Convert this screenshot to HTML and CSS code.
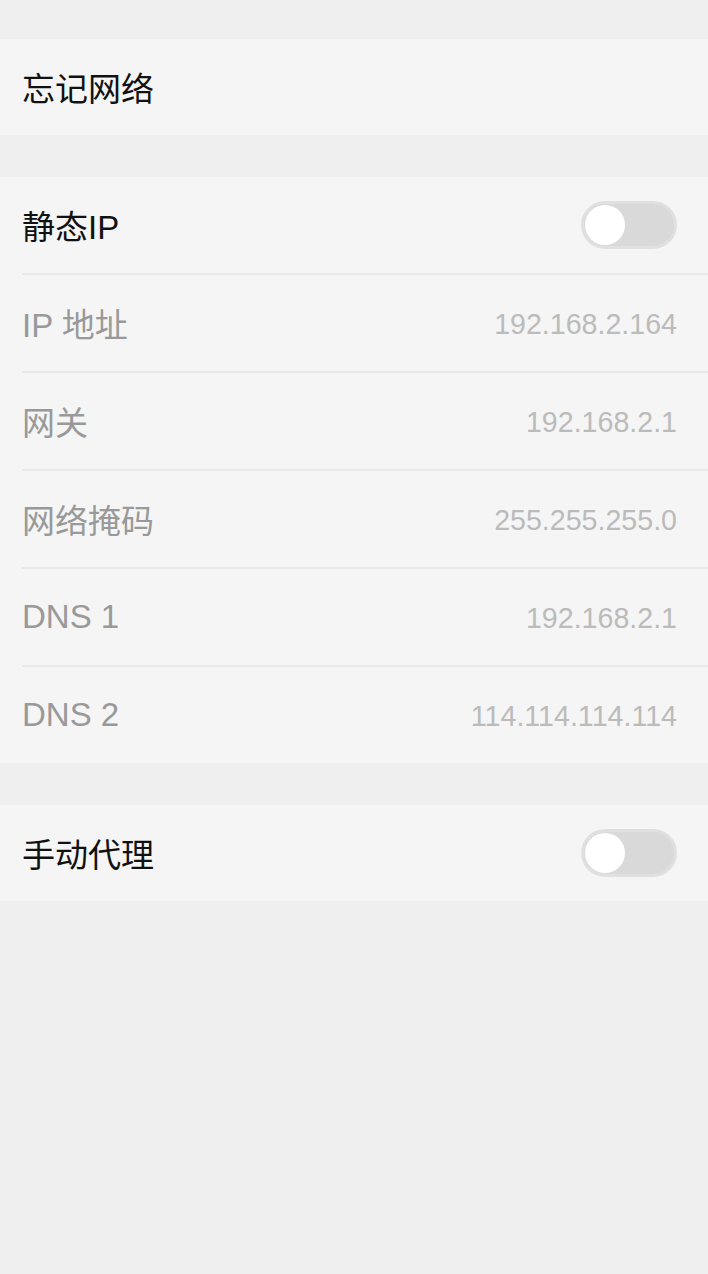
FILE: index.html
```html
<!DOCTYPE html>
<html lang="zh">
<head>
<meta charset="utf-8">
<link rel="stylesheet" href="styles.css">
</head>
<body>
<div class="page">
  <div class="group">
    <div class="row"><span class="label">忘记网络</span></div>
  </div>
  <div class="group">
    <div class="row"><span class="label">静态IP</span><span class="switch"><span class="knob"></span></span></div>
    <div class="row dim"><span class="label">IP 地址</span><span class="value">192.168.2.164</span></div>
    <div class="row dim"><span class="label">网关</span><span class="value">192.168.2.1</span></div>
    <div class="row dim"><span class="label">网络掩码</span><span class="value">255.255.255.0</span></div>
    <div class="row dim"><span class="label">DNS 1</span><span class="value">192.168.2.1</span></div>
    <div class="row dim"><span class="label">DNS 2</span><span class="value">114.114.114.114</span></div>
  </div>
  <div class="group">
    <div class="row"><span class="label">手动代理</span><span class="switch"><span class="knob"></span></span></div>
  </div>
</div>
</body>
</html>
```
FILE: styles.css
```css
html, body {
  margin: 0;
  padding: 0;
  background: #efefef;
}
body {
  font-family: "Liberation Sans", "Noto Sans CJK SC", sans-serif;
  width: 708px;
  height: 1274px;
}
.page {
  padding-top: 39px;
  display: flex;
  flex-direction: column;
  gap: 42px;
}
.group {
  background: #f5f5f5;
  padding-left: 22px;
}
.row {
  height: 96px;
  display: flex;
  align-items: center;
  justify-content: space-between;
  padding-right: 31px;
  border-top: 2px solid #e8e8e8;
}
.row:first-child {
  border-top: none;
}
.label {
  font-size: 33px;
  color: #111;
}
.dim .label {
  color: #999999;
}
.value {
  font-size: 28.6px;
  color: #bbbbbb;
  padding-top: 3px;
}
.switch {
  width: 96px;
  height: 48px;
  box-sizing: border-box;
  border-radius: 24px;
  background: #d9d9d9;
  border: 3px solid #e0e0e0;
  display: flex;
  align-items: center;
  padding-left: 1px;
}
.knob {
  width: 40px;
  height: 40px;
  border-radius: 50%;
  background: #fff;
}
```
